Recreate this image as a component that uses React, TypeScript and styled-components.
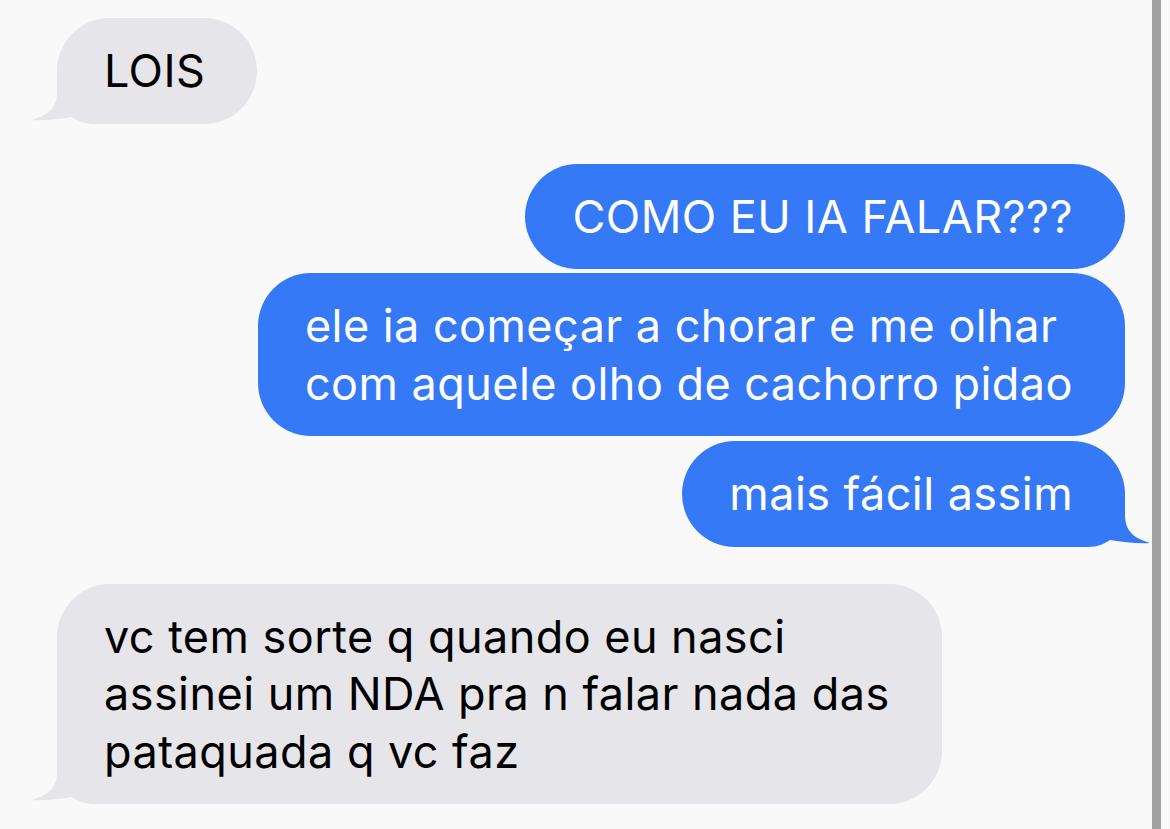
import React from "react";
import styled, { createGlobalStyle } from "styled-components";

const GlobalStyle = createGlobalStyle`
  html, body {
    margin: 0;
    padding: 0;
    background: #f9f9f9;
  }
`;

const Page = styled.div`
  width: 1170px;
  height: 829px;
  display: flex;
  overflow: hidden;
  background: #f9f9f9;
`;

const Chat = styled.div`
  width: 1152px;
  padding: 18px 27px 0 57px;
  box-sizing: border-box;
  display: flex;
  flex-direction: column;
`;

const Scrollbar = styled.div`
  width: 9px;
  background: #a0a0a0;
`;

const Row = styled.div<{ $out?: boolean; $gap: number }>`
  display: flex;
  justify-content: ${(p) => (p.$out ? "flex-end" : "flex-start")};
  margin-top: ${(p) => p.$gap}px;
`;

const Bubble = styled.div<{ $out?: boolean }>`
  position: relative;
  padding: 24px 52px 24px 47px;
  border-radius: 53px;
  background: ${(p) => (p.$out ? "#3579f6" : "#e5e5ea")};
  color: ${(p) => (p.$out ? "#ffffff" : "#000000")};
  font-family: Inter, "Liberation Sans", sans-serif;
  font-size: 45px;
  letter-spacing: 0.45px;
  line-height: 57.5px;
  white-space: pre-line;
`;

const Text = styled.span`
  position: relative;
`;

const TailSvg = styled.svg<{ $out?: boolean }>`
  position: absolute;
  bottom: 0;
  width: 80px;
  height: 55px;
  ${(p) =>
    p.$out
      ? "right: -25px; transform: scaleX(-1);"
      : "left: -25px;"}
`;

function Tail({ out }: { out?: boolean }) {
  return (
    <TailSvg $out={out} viewBox="0 0 80 55">
      <path
        d="M25,0 L25,22 C25,36 20,45 0,51 C12,52 26,50 40,48 C46,52 52,55 62,55 L80,55 L80,0 Z"
        fill={out ? "#3579f6" : "#e5e5ea"}
      />
    </TailSvg>
  );
}

type Message = { text: string; out?: boolean; tail?: boolean; gap: number };

const messages: Message[] = [
  { text: "LOIS", tail: true, gap: 0 },
  { text: "COMO EU IA FALAR???", out: true, gap: 40 },
  {
    text: "ele ia começar a chorar e me olhar\ncom aquele olho de cachorro pidao",
    out: true,
    gap: 4,
  },
  { text: "mais fácil assim", out: true, tail: true, gap: 5 },
  {
    text: "vc tem sorte q quando eu nasci\nassinei um NDA pra n falar nada das\npataquada q vc faz",
    tail: true,
    gap: 37,
  },
];

export default function App() {
  return (
    <Page>
      <GlobalStyle />
      <Chat>
        {messages.map((m, i) => (
          <Row key={i} $out={m.out} $gap={m.gap}>
            <Bubble $out={m.out}>
              {m.tail && <Tail out={m.out} />}
              <Text>{m.text}</Text>
            </Bubble>
          </Row>
        ))}
      </Chat>
      <Scrollbar />
    </Page>
  );
}
